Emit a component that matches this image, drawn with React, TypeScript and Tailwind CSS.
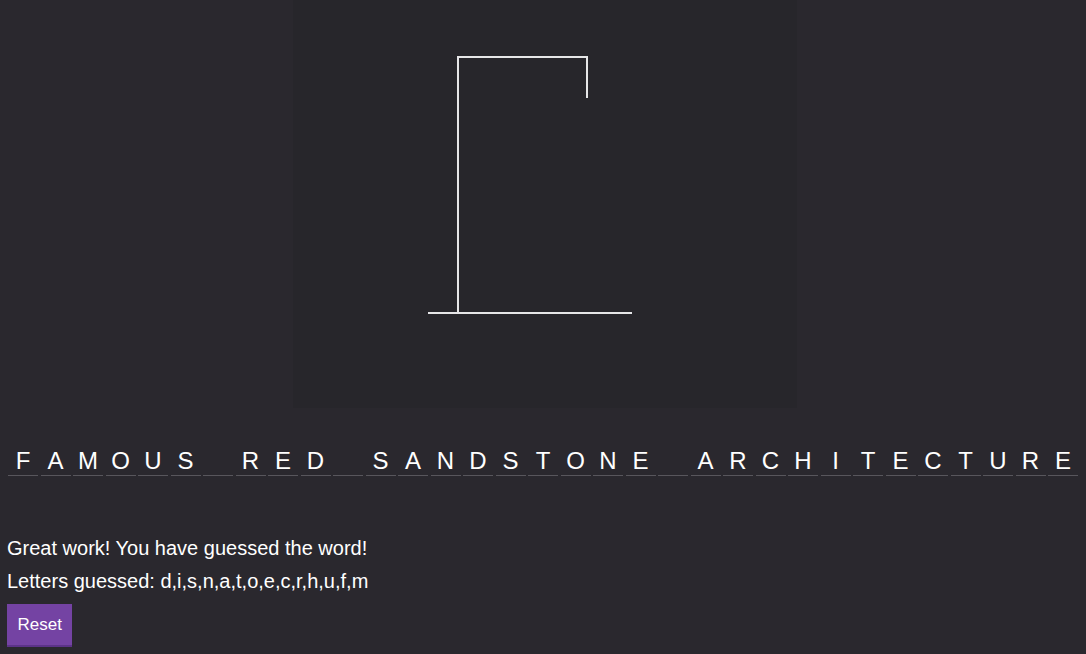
const phrase = 'FAMOUS RED SANDSTONE ARCHITECTURE';
const guessed = ['d', 'i', 's', 'n', 'a', 't', 'o', 'e', 'c', 'r', 'h', 'u', 'f', 'm'];

function Gallows() {
  return (
    <svg width="504" height="408" viewBox="0 0 504 408" className="block">
      <g stroke="#e6e6e8" strokeWidth="2" fill="none" strokeLinecap="square">
        <line x1="136" y1="313" x2="338" y2="313" />
        <line x1="165" y1="313" x2="165" y2="57" />
        <line x1="165" y1="57" x2="294" y2="57" />
        <line x1="294" y1="57" x2="294" y2="97" />
      </g>
    </svg>
  );
}

export default function App() {
  return (
    <div className="min-h-screen bg-[#2a282e] font-['Liberation_Sans',Arial,sans-serif] text-white">
      <div className="pl-1">
        <div className="mx-auto w-[504px] h-[408px] bg-[#27262b]">
          <Gallows />
        </div>
      </div>

      <div className="mt-[41px] flex gap-[2.5px] px-2">
        {phrase.split('').map((ch, i) => (
          <div
            key={i}
            className="w-[30px] h-[27px] border-b border-[#58565c] pb-[2px] text-center text-[24px] leading-[24px]"
          >
            {ch === ' ' ? '' : ch}
          </div>
        ))}
      </div>

      <div className="mt-[61px] flex flex-col items-start pl-[7px]">
        <p className="text-[20px] leading-[23px]">Great work! You have guessed the word!</p>
        <p className="mt-[10px] text-[20px] leading-[23px]">Letters guessed: {guessed.join(',')}</p>
        <button className="mt-[11px] h-[43px] bg-[#7443a3] border-b-2 border-[#5c3388] px-[10.5px] text-[17px] text-white">
          Reset
        </button>
      </div>
    </div>
  );
}
